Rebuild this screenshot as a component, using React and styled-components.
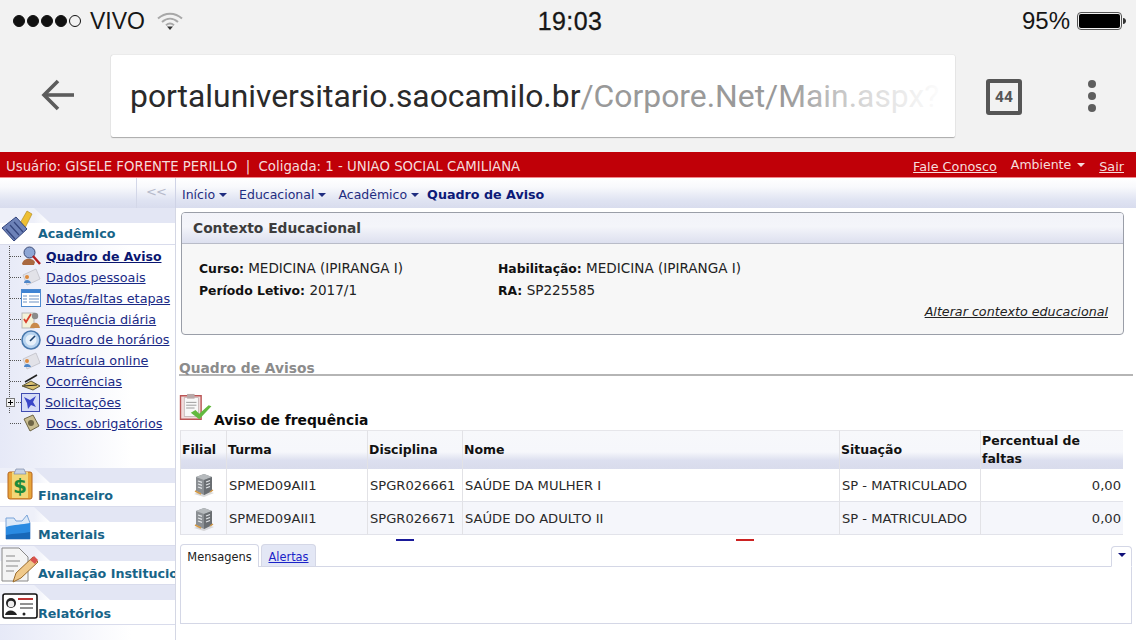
import styled, { createGlobalStyle } from "styled-components";
import { Fragment } from "react";

const Global = createGlobalStyle`
  html, body { margin: 0; padding: 0; background: #fff; }
  body { width: 1136px; height: 640px; overflow: hidden; font-family: "DejaVu Sans", Verdana, sans-serif; }
  * { box-sizing: border-box; }
`;

const Page = styled.div`
  width: 1136px;
  height: 640px;
  display: flex;
  flex-direction: column;
  overflow: hidden;
`;

/* phone + browser chrome */
const Chrome = styled.div`
  height: 152px;
  background: #f2f2f2;
  flex: none;
`;
const StatusBar = styled.div`
  height: 42px;
  display: grid;
  grid-template-columns: 1fr auto 1fr;
  align-items: center;
  padding: 0 9px 0 13px;
  font-family: "Liberation Sans", Arial, sans-serif;
  font-size: 23px;
  color: #161616;
`;
const Carrier = styled.div`
  display: flex;
  align-items: center;
  gap: 12px;
`;
const Signal = styled.div`
  display: flex;
  gap: 2px;
  margin-right: -3px;
`;
const Dot = styled.span`
  width: 12px;
  height: 12px;
  border-radius: 50%;
  background: ${(p) => (p.$off ? "transparent" : "#111")};
  border: 1px solid #111;
`;
const Clock = styled.div`
  font-size: 25px;
  letter-spacing: 0.4px;
  -webkit-text-stroke: 0.3px #161616;
`;
const BatteryBox = styled.div`
  display: flex;
  justify-content: flex-end;
  align-items: center;
  gap: 7px;
  font-size: 24px;
`;
const UrlRow = styled.div`
  height: 110px;
  display: flex;
  align-items: flex-start;
  padding-top: 13px;
`;
const Back = styled.div`
  width: 111px;
  flex: none;
  padding: 24px 0 0 41px;
  color: #5c5c5c;
`;
const UrlBox = styled.div`
  width: 844px;
  height: 82px;
  flex: none;
  background: #fff;
  border-radius: 2px;
  box-shadow: 0 0 1px #aaa, 0 1px 1px #aaa;
  padding-left: 19px;
  display: flex;
  align-items: center;
  font-family: Roboto, sans-serif;
  font-size: 31.85px;
  white-space: nowrap;
  overflow: hidden;
  position: relative;
  color: #2a2a2a;
  span { color: #999; }
  &::after {
    content: "";
    position: absolute;
    top: 0;
    bottom: 0;
    right: 0;
    width: 170px;
    background: linear-gradient(to right, rgba(255,255,255,0), rgba(255,255,255,0.6) 45%, rgba(255,255,255,0.88) 78%, #fff 95%);
  }
`;
const TabCount = styled.div`
  width: 36px;
  height: 36px;
  margin: 24px 0 0 31px;
  border: 4px solid #565656;
  border-radius: 3px;
  font-family: Roboto, sans-serif;
  font-weight: 700;
  font-size: 15.5px;
  color: #565656;
  display: flex;
  align-items: center;
  justify-content: center;
  flex: none;
`;
const Kebab = styled.div`
  margin: 25px 0 0 66px;
  display: flex;
  flex-direction: column;
  gap: 4px;
  span {
    width: 8px;
    height: 8px;
    border-radius: 50%;
    background: #5e5e5e;
  }
`;

/* portal top bars */
const RedBar = styled.div`
  height: 26px;
  flex: none;
  background: #c00008;
  border-bottom: 1px solid #f2888c;
  color: #f6dcdc;
  font-size: 13.3px;
  display: flex;
  align-items: center;
  justify-content: space-between;
  padding: 3px 12px 0 6px;
  white-space: nowrap;
`;
const RedLinks = styled.div`
  display: flex;
  align-items: center;
  gap: 14px;
  font-size: 12.8px;
  a { color: #f6dcdc; text-decoration: underline; }
`;
const Ambiente = styled.span`
  display: flex;
  align-items: center;
  gap: 6px;
  margin-top: -3px;
  font-size: 12.5px;
  &::after {
    content: "";
    border: 4px solid transparent;
    border-top: 4px solid #f6dcdc;
    border-bottom: 0;
  }
`;
const NavBar = styled.div`
  height: 30px;
  flex: none;
  display: flex;
  background: linear-gradient(#fff 0, #f8f9fc 30%, #dfe3f2 75%, #d8dcee 100%);
`;
const NavSide = styled.div`
  width: 176px;
  flex: none;
  display: flex;
  justify-content: flex-end;
  border-right: 1px solid #cfd3e6;
`;
const Collapse = styled.div`
  width: 39px;
  border-left: 1px solid #d3d7e8;
  color: #b7bbcb;
  font-size: 13px;
  text-align: center;
  line-height: 27px;
  letter-spacing: -1px;
`;
const Crumbs = styled.div`
  display: flex;
  align-items: center;
  gap: 12px;
  padding: 2px 0 0 6px;
  font-size: 12.5px;
  color: #1f2d80;
  white-space: nowrap;
  b { color: #0c1a78; font-size: 12.7px; margin-left: -4px; }
`;
const Crumb = styled.span`
  display: flex;
  align-items: center;
  gap: 4px;
  &::after {
    content: "";
    border: 4px solid transparent;
    border-top: 4px solid #1f2d80;
    border-bottom: 0;
    margin-top: 2px;
  }
`;

const Body = styled.div`
  flex: 1;
  display: flex;
  min-height: 0;
`;

/* left accordion */
const Sidebar = styled.aside`
  width: 176px;
  flex: none;
  border-right: 1px solid #d4d7e4;
  background: linear-gradient(to right, #e6e9f7, #ffffff 75%);
  overflow: hidden;
`;
const PanelHead = styled.div`
  height: ${(p) => p.$h || 39}px;
  margin-top: ${(p) => p.$top || 0}px;
  display: flex;
  align-items: flex-end;
  background: linear-gradient(#e3e6f4 0 15px, #fff 15px);
  border-bottom: 1px solid #d9dcec;
  position: relative;
  color: #176488;
  font-weight: 700;
  font-size: 12.7px;
  white-space: nowrap;
  &::before {
    content: "";
    position: absolute;
    left: 0;
    top: 0;
    width: 50px;
    height: 15px;
    background: linear-gradient(to right, #eef0f9 34px, #fff 50px);
    clip-path: polygon(0 0, 34px 0, 50px 100%, 0 100%);
  }
`;
const HeadIcon = styled.div`
  width: 38px;
  flex: none;
  align-self: flex-start;
  position: relative;
  z-index: 1;
  margin-top: ${(p) => p.$top || 0}px;
  padding-left: ${(p) => p.$left || 0}px;
  svg { display: block; }
`;
const HeadLabel = styled.div`
  padding-bottom: 3px;
  position: relative;
  z-index: 1;
`;
const Tree = styled.ul`
  list-style: none;
  margin: 1px 0 0 9px;
  padding: 0;
  border-left: 1px dotted #555;
  height: 167px;
  width: 166px;
`;
const TreeItem = styled.li`
  height: 20.875px;
  display: flex;
  align-items: center;
  font-size: 12.8px;
  font-weight: ${(p) => (p.$on ? 700 : 400)};
  white-space: nowrap;
  position: relative;
  &::before {
    content: "";
    width: 11px;
    flex: none;
    border-top: 1px dotted #555;
  }
  a { color: ${(p) => (p.$on ? "#0a1670" : "#1a2a86")}; text-decoration: underline; margin-left: 5px; }
  b { font-size: 12.5px; }
`;
const Plus = styled.span`
  position: absolute;
  left: -4px;
  top: 6px;
  width: 9px;
  height: 9px;
  border: 1px solid #777;
  background: #f3f3f3;
  &::before {
    content: "";
    position: absolute;
    left: 1px;
    right: 1px;
    top: 3px;
    height: 1px;
    background: #000;
  }
  &::after {
    content: "";
    position: absolute;
    top: 1px;
    bottom: 1px;
    left: 3px;
    width: 1px;
    background: #000;
  }
`;

/* content */
const Main = styled.main`
  flex: 1;
  min-width: 0;
  padding: 4px 3px 0 3px;
`;
const ContextCard = styled.section`
  width: 943px;
  height: 123px;
  margin-left: 2px;
  border: 1px solid #9a9ea8;
  border-radius: 4px;
  background: #f7f7f7;
`;
const ContextHead = styled.div`
  height: 31px;
  padding: 0 11px;
  display: flex;
  align-items: center;
  font-size: 13.8px;
  font-weight: 700;
  color: #3d3d3d;
  background: linear-gradient(#f2f3f9, #f4f5fa 45%, #dde0ef);
  border-bottom: 1px solid #b9bcc8;
  border-radius: 3px 3px 0 0;
`;
const ContextGrid = styled.div`
  display: grid;
  grid-template-columns: 299px 1fr;
  grid-auto-rows: 22px;
  padding: 16px 0 0 17px;
  font-size: 13.55px;
  color: #222;
  white-space: nowrap;
  b { color: #111; font-size: 12.4px; }
`;
const ChangeLink = styled.div`
  text-align: right;
  padding: 0 15px 0 0;
  font-size: 12.7px;
  font-style: italic;
  color: #222;
  text-decoration: underline;
`;
const SectionTitle = styled.h3`
  margin: 26px 0 0 0;
  height: 15px;
  width: 954px;
  font-size: 13.8px;
  line-height: 14px;
  font-weight: 700;
  color: #8c8c8c;
  border-bottom: 2px solid #b5b5b5;
  white-space: nowrap;
`;
const NoticeTitle = styled.div`
  display: flex;
  align-items: flex-end;
  gap: 2px;
  height: 37px;
  margin-top: 16px;
  font-size: 13.85px;
  font-weight: 700;
  color: #0c0c0c;
  white-space: nowrap;
  svg { flex: none; margin-bottom: 6px; }
  span { margin-bottom: 1px; }
`;
const Table = styled.div`
  margin: 1px 0 0 1px;
  width: 943px;
  display: grid;
  grid-template-columns: 46px 141px 95px 377px 141px 143px;
  grid-template-rows: 39px 33px 33px;
  font-size: 13.1px;
`;
const Th = styled.div`
  background: linear-gradient(#f7f8fb 0, #f6f7fb 55%, #dcdfef 78%, #d9dcec 100%);
  border-left: 1px solid #e2e2e6;
  border-top: 1px solid #e6e6ea;
  padding: 0 1px;
  display: flex;
  align-items: center;
  font-weight: 700;
  font-size: 12.5px;
  line-height: 18px;
  color: #111;
`;
const Td = styled.div`
  background: ${(p) => (p.$alt ? "#f5f6fb" : "#fff")};
  border-left: 1px solid #e2e2e6;
  border-bottom: 1px solid #e2e3ea;
  padding: ${(p) => (p.$alt ? "1px 2px 0" : "0 2px")};
  display: flex;
  align-items: center;
  justify-content: ${(p) => p.$justify || "flex-start"};
  color: #2a2a2a;
  white-space: nowrap;
`;
const Marks = styled.div`
  height: 9px;
  display: flex;
  align-items: flex-start;
  padding: 4px 0 0 217px;
`;
const Mark = styled.span`
  width: 18px;
  height: 2px;
  background: ${(p) => p.$color};
  margin-right: ${(p) => p.$gap || 0}px;
`;
const Tabs = styled.div`
  width: 952px;
  margin-left: 1px;
`;
const TabRow = styled.div`
  height: 23px;
  display: flex;
  gap: 2px;
  border-bottom: 1px solid #d4d7e6;
  font-size: 11.4px;
  position: relative;
`;
const Tab = styled.div`
  width: ${(p) => p.$w}px;
  height: ${(p) => (p.$on ? 23 : 22)}px;
  border: 1px solid #d4d7e6;
  border-bottom: 0;
  border-radius: 4px 4px 0 0;
  background: ${(p) => (p.$on ? "#fff" : "#e3e7f5")};
  color: ${(p) => (p.$on ? "#222" : "#1a22c8")};
  text-decoration: ${(p) => (p.$on ? "none" : "underline")};
  display: flex;
  align-items: center;
  justify-content: center;
  padding-top: 2px;
`;
const TabMenu = styled.div`
  position: absolute;
  right: 0;
  top: 2px;
  width: 21px;
  height: 21px;
  background: #fff;
  border: 1px solid #d4d7e6;
  border-bottom: 1px solid #fff;
  border-radius: 4px 4px 0 0;
  display: flex;
  justify-content: center;
  padding-top: 6px;
  &::after {
    content: "";
    width: 0;
    height: 0;
    border: 4px solid transparent;
    border-top: 4px solid #10107a;
    border-bottom: 0;
  }
`;
const TabPanel = styled.div`
  height: 57px;
  border: 1px solid #d4d7e6;
  border-top: 0;
`;

/* drawn icons */
const Wifi = () => (
  <svg width="26" height="20" viewBox="0 0 26 20" fill="none" stroke="#a8a8a8" strokeWidth="2">
    <path d="M1 7.5C8 1 18 1 25 7.5" />
    <path d="M5 11C10 6.5 16 6.5 21 11" />
    <path d="M9 14.2C11.5 12 14.5 12 17 14.2" />
    <path d="M10 15.5h6L13 19z" fill="#333" stroke="none" />
  </svg>
);
const Battery = () => (
  <svg width="50" height="20" viewBox="0 0 50 20">
    <rect x="0.5" y="1.5" width="44" height="17" rx="3.5" fill="none" stroke="#555" />
    <rect x="2" y="3" width="41" height="14" rx="2" fill="#000" />
    <path d="M46 7c2 0 3 1.5 3 3s-1 3-3 3z" fill="#333" />
  </svg>
);
const BackArrow = () => (
  <svg width="33" height="32" viewBox="0 0 33 32" fill="none" stroke="currentColor" strokeWidth="3.6">
    <path d="M33 16H3" />
    <path d="M17 2L3 16l14 14" />
  </svg>
);
const Broom = () => (
  <svg width="38" height="38" viewBox="0 0 38 38">
    <path d="M19 17L27 3l5 3-7 14z" fill="#eebf33" stroke="#a8831a" strokeWidth=".6" />
    <path d="M2 20L16 9l11 12-13 12z" fill="#6d82b8" stroke="#33457d" />
    <path d="M6 21l9 10M10 17l9 10M14 14l9 10" stroke="#33457d" strokeWidth="1.2" />
  </svg>
);
const MoneyIcon = () => (
  <svg width="26" height="32" viewBox="0 0 26 32">
    <rect x="1" y="4" width="24" height="27" rx="2" fill="#e8a53a" stroke="#b5651d" />
    <rect x="5" y="4" width="16" height="26" fill="#f2d777" />
    <path d="M9 1h8l2 5H7z" fill="#c9d3e6" stroke="#7b8aa8" strokeWidth=".7" />
    <text x="13" y="25" fontSize="20" fontWeight="700" fontFamily="DejaVu Sans" textAnchor="middle" fill="#1e8a3a">$</text>
  </svg>
);
const FolderIcon = () => (
  <svg width="26" height="28" viewBox="0 0 26 28">
    <path d="M1 5h8l2 3h6l5-6 3 8v16H1z" fill="#dce9f8" stroke="#7aa4d8" />
    <path d="M1 14c8-3 16-2 24-4v16H1z" fill="#2a8be2" />
    <path d="M1 22c8-2 16-1 24-3v7H1z" fill="#1868b8" />
  </svg>
);
const NotePencil = () => (
  <svg width="38" height="38" viewBox="0 0 38 38">
    <path d="M2 2h17l9 9v24H2z" fill="#f4f4f4" stroke="#888" />
    <path d="M6 10h9M6 15h14M6 20h12M6 25h8" stroke="#888" strokeWidth="1.2" />
    <path d="M13 36l3-9 17-16 5 5-17 16z" fill="#f0c98a" stroke="#9a6b2c" />
    <path d="M30 14l4-4 4 4-3 4z" fill="#d9534f" />
  </svg>
);
const CardIcon = () => (
  <svg width="36" height="26" viewBox="0 0 36 26">
    <rect x="1" y="1" width="34" height="24" rx="2" fill="#fff" stroke="#111" strokeWidth="1.6" />
    <path d="M16 6h15" stroke="#b33" strokeWidth="2" />
    <path d="M18 11h13M18 15h13" stroke="#222" />
    <circle cx="9" cy="10" r="5" fill="#222" />
    <circle cx="9" cy="11" r="3.2" fill="#eee" />
    <path d="M3 22c1-6 10-6 12 0z" fill="#222" />
    <circle cx="22" cy="21" r="1.5" fill="#222" />
  </svg>
);
const Magnifier = () => (
  <svg width="20" height="20" viewBox="0 0 20 20">
    <path d="M1 18c1-6 10-7 13-2l-1 3H2z" fill="#a9683f" />
    <circle cx="8.5" cy="6.5" r="5.5" fill="#8ea6d4" stroke="#3d4c76" />
    <path d="M12 10l7 8" stroke="#b32020" strokeWidth="2.4" />
  </svg>
);
const CardPerson = () => (
  <svg width="20" height="20" viewBox="0 0 20 20">
    <path d="M2 8l13-6 4 10-13 6z" fill="#e2e2e8" stroke="#c8c8d0" />
    <circle cx="6" cy="10" r="2" fill="#dd8a3c" />
    <path d="M3 16c0-4 6-4 7 0z" fill="#4e86c8" />
  </svg>
);
const GridIcon = () => (
  <svg width="20" height="18" viewBox="0 0 20 18">
    <rect x=".5" y=".5" width="19" height="17" fill="#fff" stroke="#4d8ad0" />
    <rect x="1" y="1" width="18" height="3" fill="#3f84d4" />
    <path d="M2 7h4M8 7h10M2 10h4M8 10h10M2 13h4M8 13h10" stroke="#9db7d8" strokeWidth="1.5" />
  </svg>
);
const CheckList = () => (
  <svg width="20" height="20" viewBox="0 0 20 20">
    <rect x="1" y="4" width="12" height="15" fill="#f4f2d8" stroke="#b7b7b7" />
    <path d="M3 10l2 3 5-8" stroke="#d8402c" strokeWidth="1.8" fill="none" />
    <circle cx="14" cy="7" r="3.2" fill="#8b8b8b" />
    <path d="M9 19c1-7 9-7 10 0z" fill="#c98a4a" />
  </svg>
);
const ClockIcon = () => (
  <svg width="20" height="20" viewBox="0 0 20 20">
    <circle cx="10" cy="10" r="9" fill="#b7d3ef" stroke="#4a79ad" strokeWidth="1.6" />
    <circle cx="10" cy="10" r="5.5" fill="#e6f0fa" />
    <path d="M9 11l5-5" stroke="#1b3f6c" strokeWidth="1.6" />
  </svg>
);
const HandWrite = () => (
  <svg width="20" height="18" viewBox="0 0 20 18">
    <path d="M1 13l9-5 9 5-7 4z" fill="#d8c070" stroke="#3c3a1c" strokeWidth=".8" />
    <path d="M4 9l12-7" stroke="#222" strokeWidth="1.6" />
    <path d="M3 13l13-1" stroke="#222" />
  </svg>
);
const RequestIcon = () => (
  <svg width="19" height="19" viewBox="0 0 19 19">
    <rect x=".5" y=".5" width="18" height="18" fill="#d5dbf6" stroke="#3f4bb0" />
    <path d="M3 4l6 3 6-4-3 6 3 5-5-2-3 4-1-6z" fill="#3a46c8" />
  </svg>
);
const DocsIcon = () => (
  <svg width="20" height="20" viewBox="0 0 20 20">
    <path d="M3 6l9-4 6 11-9 5z" fill="#c9bd90" stroke="#6e6545" />
    <circle cx="10" cy="10" r="3" fill="#6e6545" />
  </svg>
);
const BuildingIcon = () => (
  <svg width="24" height="24" viewBox="0 0 24 24">
    <path d="M2 21l10 3 10-4-10-3z" fill="#bbb" opacity=".55" />
    <path d="M4 4l8-3 8 3v14l-8 4-8-4z" fill="#8b8f93" />
    <path d="M4 4l8 3 8-3-8-3z" fill="#b6babd" />
    <path d="M12 7v15l8-4V4z" fill="#6a6e72" />
    <path d="M6 8l4 1.4M6 11l4 1.4M6 14l4 1.4M14 9l4-1.5M14 12l4-1.5M14 15l4-1.5" stroke="#e2e5e8" strokeWidth="1.2" />
    <path d="M3 18l6 3M18 19l3-2" stroke="#d59a45" strokeWidth="1.5" />
  </svg>
);
const NoticeIcon = () => (
  <svg width="33" height="30" viewBox="0 0 34 32">
    <path d="M1 3h22v25H1z" fill="#f1dcdc" stroke="#bb5555" strokeWidth="1.5" />
    <rect x="5" y="5" width="15" height="20" fill="#f8f8f8" stroke="#b7a7a7" strokeWidth=".7" />
    <path d="M8 1h8v5H8z" fill="#b9a9a9" />
    <path d="M7 10h11M7 13h11M7 16h9" stroke="#999" />
    <path d="M12 21l5-3 4 4 10-9 3 1-13 14z" fill="#63b93f" />
  </svg>
);

const menu = [
  { label: "Quadro de Aviso", icon: <Magnifier />, on: true },
  { label: "Dados pessoais", icon: <CardPerson /> },
  { label: "Notas/faltas etapas", icon: <GridIcon /> },
  { label: "Frequência diária", icon: <CheckList /> },
  { label: "Quadro de horários", icon: <ClockIcon /> },
  { label: "Matrícula online", icon: <CardPerson /> },
  { label: "Ocorrências", icon: <HandWrite /> },
  { label: "Solicitações", icon: <RequestIcon />, plus: true },
  { label: "Docs. obrigatórios", icon: <DocsIcon /> },
];

const rows = [
  { turma: "SPMED09AII1", disc: "SPGR026661", nome: "SAÚDE DA MULHER I" },
  { turma: "SPMED09AII1", disc: "SPGR026671", nome: "SAÚDE DO ADULTO II", alt: true },
];

export default function App() {
  return (
    <Page>
      <Global />
      <Chrome>
        <StatusBar>
          <Carrier>
            <Signal>
              <Dot /><Dot /><Dot /><Dot /><Dot $off />
            </Signal>
            <span>VIVO</span>
            <Wifi />
          </Carrier>
          <Clock>19:03</Clock>
          <BatteryBox>
            <span>95%</span>
            <Battery />
          </BatteryBox>
        </StatusBar>
        <UrlRow>
          <Back><BackArrow /></Back>
          <UrlBox>portaluniversitario.saocamilo.br<span>/Corpore.Net/Main.aspx?</span></UrlBox>
          <TabCount>44</TabCount>
          <Kebab><span /><span /><span /></Kebab>
        </UrlRow>
      </Chrome>

      <RedBar>
        <div>Usuário: GISELE FORENTE PERILLO &nbsp;|&nbsp; Coligada: 1 - UNIAO SOCIAL CAMILIANA</div>
        <RedLinks>
          <a>Fale Conosco</a>
          <Ambiente>Ambiente</Ambiente>
          <a>Sair</a>
        </RedLinks>
      </RedBar>

      <NavBar>
        <NavSide><Collapse>{"<<"}</Collapse></NavSide>
        <Crumbs>
          <Crumb>Início</Crumb>
          <Crumb>Educacional</Crumb>
          <Crumb>Acadêmico</Crumb>
          <b>Quadro de Aviso</b>
        </Crumbs>
      </NavBar>

      <Body>
        <Sidebar>
          <PanelHead $h={37}>
            <HeadIcon><Broom /></HeadIcon>
            <HeadLabel>Acadêmico</HeadLabel>
          </PanelHead>
          <Tree>
            {menu.map((m) => (
              <TreeItem key={m.label} $on={m.on}>
                {m.plus && <Plus />}
                {m.icon}
                <a>{m.on ? <b>{m.label}</b> : m.label}</a>
              </TreeItem>
            ))}
          </Tree>
          <PanelHead $top={55}>
            <HeadIcon $left={7}><MoneyIcon /></HeadIcon>
            <HeadLabel>Financeiro</HeadLabel>
          </PanelHead>
          <PanelHead>
            <HeadIcon $left={5} $top={6}><FolderIcon /></HeadIcon>
            <HeadLabel>Materiais</HeadLabel>
          </PanelHead>
          <PanelHead>
            <HeadIcon><NotePencil /></HeadIcon>
            <HeadLabel>Avaliação Institucional</HeadLabel>
          </PanelHead>
          <PanelHead $h={40}>
            <HeadIcon $left={2} $top={8}><CardIcon /></HeadIcon>
            <HeadLabel>Relatórios</HeadLabel>
          </PanelHead>
        </Sidebar>

        <Main>
          <ContextCard>
            <ContextHead>Contexto Educacional</ContextHead>
            <ContextGrid>
              <div><b>Curso:</b> MEDICINA (IPIRANGA I)</div>
              <div><b>Habilitação:</b> MEDICINA (IPIRANGA I)</div>
              <div><b>Período Letivo:</b> 2017/1</div>
              <div><b>RA:</b> SP225585</div>
            </ContextGrid>
            <ChangeLink>Alterar contexto educacional</ChangeLink>
          </ContextCard>

          <SectionTitle>Quadro de Avisos</SectionTitle>
          <NoticeTitle>
            <NoticeIcon />
            <span>Aviso de frequência</span>
          </NoticeTitle>

          <Table>
            <Th>Filial</Th>
            <Th>Turma</Th>
            <Th>Disciplina</Th>
            <Th>Nome</Th>
            <Th>Situação</Th>
            <Th>Percentual de faltas</Th>
            {rows.map((r) => (
              <Fragment key={r.disc}>
                <Td $alt={r.alt} $justify="center"><BuildingIcon /></Td>
                <Td $alt={r.alt}>{r.turma}</Td>
                <Td $alt={r.alt}>{r.disc}</Td>
                <Td $alt={r.alt}>{r.nome}</Td>
                <Td $alt={r.alt}>SP - MATRICULADO</Td>
                <Td $alt={r.alt} $justify="flex-end">0,00</Td>
              </Fragment>
            ))}
          </Table>
          <Marks>
            <Mark $color="#1a1a9a" $gap={322} />
            <Mark $color="#cc2222" />
          </Marks>
          <Tabs>
            <TabRow>
              <Tab $on $w={79}>Mensagens</Tab>
              <Tab $w={55}>Alertas</Tab>
              <TabMenu />
            </TabRow>
            <TabPanel />
          </Tabs>
        </Main>
      </Body>
    </Page>
  );
}
